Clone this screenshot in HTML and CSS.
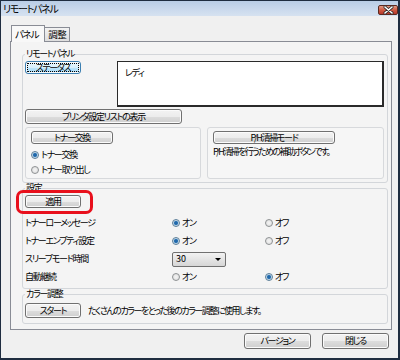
FILE: index.html
```html
<!DOCTYPE html>
<html lang="ja">
<head>
<meta charset="utf-8">
<link rel="stylesheet" href="styles.css">
</head>
<body>
<div class="window">
  <div class="titlebar">
    <span class="title">リモートパネル</span>
    <span class="close"><svg width="11" height="8" viewBox="0 0 11 8"><path d="M2 1 L9 7 M9 1 L2 7" stroke="#2a2a2a" stroke-width="3" stroke-linecap="round"/><path d="M2 1 L9 7 M9 1 L2 7" stroke="#ffffff" stroke-width="1.6" stroke-linecap="round"/></svg></span>
  </div>
  <div class="client">
    <div class="tabs">
      <div class="tab active">パネル</div>
      <div class="tab">調整</div>
    </div>
    <div class="panel">
      <fieldset class="group g1">
        <legend>リモートパネル</legend>
        <div class="row1">
          <button class="btn focus status">ステータス</button>
          <div class="statusbox">レディ</div>
        </div>
        <button class="btn listbtn">プリンタ設定リストの表示</button>
        <div class="subs">
          <div class="sub">
            <button class="btn tonerbtn">トナー交換</button>
            <div class="opt first"><span class="radio on"></span>トナー交換</div>
            <div class="opt"><span class="radio"></span>トナー取り出し</div>
          </div>
          <div class="sub">
            <button class="btn phbtn">P/H清掃モード</button>
            <p class="note">P/H清掃を行うための補助ボタンです。</p>
          </div>
        </div>
      </fieldset>
      <fieldset class="group g2">
        <legend>設定</legend>
        <div class="applywrap">
          <button class="btn apply">適用</button>
          <span class="highlight"></span>
        </div>
        <div class="settings">
          <div class="lbl">トナーローメッセージ</div>
          <div class="opt"><span class="radio on"></span>オン</div>
          <div class="opt"><span class="radio"></span>オフ</div>

          <div class="lbl">トナーエンプティ設定</div>
          <div class="opt"><span class="radio on"></span>オン</div>
          <div class="opt"><span class="radio"></span>オフ</div>

          <div class="lbl">スリープモード時間</div>
          <div class="opt"><div class="select"><span>30</span><span class="arrow"></span></div></div>
          <div></div>

          <div class="lbl">自動継続</div>
          <div class="opt"><span class="radio"></span>オン</div>
          <div class="opt"><span class="radio on"></span>オフ</div>
        </div>
      </fieldset>
      <fieldset class="group g3">
        <legend>カラー調整</legend>
        <div class="colorrow">
          <button class="btn startbtn">スタート</button>
          <span>たくさんのカラーをとった後のカラー調整に使用します。</span>
        </div>
      </fieldset>
    </div>
    <div class="footer">
      <button class="btn fbtn">バージョン</button>
      <button class="btn fbtn">閉じる</button>
    </div>
  </div>
</div>
</body>
</html>
```

FILE: styles.css
```css
* { box-sizing: border-box; }
html, body { margin: 0; padding: 0; }
body {
  width: 400px;
  height: 360px;
  font-family: "Noto Sans CJK JP", "Noto Sans", sans-serif;
  font-size: 9px;
  line-height: 12px;
  font-feature-settings: "palt";
  letter-spacing: -1.3px;
  color: #000;
  background: #f0f0f0;
}
.window {
  width: 400px;
  height: 360px;
  border: 1px solid #1f2d40;
  border-width: 1px 2px 2px 1px;
  background: #f0f0f0;
  display: flex;
  flex-direction: column;
}
.titlebar {
  height: 15px;
  flex: none;
  display: flex;
  align-items: center;
  justify-content: space-between;
  padding: 0 0 0 2px;
  background: linear-gradient(#b9cde6, #cbdaed 60%, #d6e2f0);
}
.title {
  font-size: 10px;
  line-height: 12px;
  letter-spacing: -1.3px;
}
.close {
  width: 20px;
  height: 10px;
  margin-top: 3px;
  border: 1px solid #5a2a20;
  border-radius: 2px;
  background: linear-gradient(#e49b86, #cf5a42 50%, #b8382a);
  display: flex;
  align-items: center;
  justify-content: center;
}
.close svg { display: block; }
.client {
  flex: 1;
  padding: 8px 6px 0 9px;
  display: flex;
  flex-direction: column;
}
.tabs {
  display: flex;
  align-items: flex-end;
  height: 17px;
  padding-left: 1px;
}
.tab {
  height: 14px;
  padding: 0 3px 0 3px;
  line-height: 13px;
  border: 1px solid #898c95;
  border-bottom: none;
  border-left: none;
  background: linear-gradient(#f2f2f2, #dedede);
  font-size: 9.5px;
  letter-spacing: -0.6px;
  white-space: nowrap;
}
.tab.active {
  height: 17px;
  margin-bottom: -1px;
  border-left: 1px solid #898c95;
  border-right: 1px solid #898c95;
  background: #f8f8f8;
  position: relative;
  z-index: 1;
  padding: 1px 6px 0 3px;
  line-height: 14px;
  letter-spacing: -1.2px;
}
.panel {
  border: 1px solid #898c95;
  background: #f4f4f4;
  height: 289px;
  padding: 0 3px 0 11px;
  display: flex;
  flex-direction: column;
}
.group {
  margin: 0;
  border: 1px solid #d3d6da;
  border-radius: 3px;
  padding: 2px 3px 3px 2px;
  min-width: 0;
}
.group legend {
  padding: 0 1px;
  margin-left: 0;
  line-height: 10px;
  height: 10px;
  white-space: nowrap;
}
.g1 { margin-top: 7px; }
.g2 { padding-bottom: 2px; }
.g3 { padding-top: 4px; padding-bottom: 5px; }

.btn {
  font: inherit;
  font-feature-settings: "palt";
  letter-spacing: -1.3px;
  color: #000;
  margin: 0;
  padding: 0;
  border: 1px solid #707070;
  border-radius: 3px;
  background: linear-gradient(#f3f3f3 0, #ececec 50%, #dddddd 51%, #cfcfcf 100%);
  box-shadow: inset 0 0 0 1px #fbfbfb;
  height: 13px;
  line-height: 11px;
  display: block;
  text-align: center;
  white-space: nowrap;
}
.btn.focus {
  border-color: #3c7fb1;
  background: linear-gradient(#eaf6fd 0, #d9f0fc 50%, #bee6fd 51%, #a7d9f5 100%);
  outline: 1px dotted #000;
  outline-offset: -3px;
}
.row1 {
  display: flex;
  align-items: flex-start;
  height: 46px;
}
.status { width: 56px; }
.statusbox {
  margin-left: 36px;
  width: 268px;
  height: 46px;
  background: #fff;
  border: solid #2a2a2a;
  border-width: 1px 2px 2px 1px;
  padding: 5px 7px;
  line-height: 12px;
}
.listbtn {
  width: 157px;
  height: 15px;
  line-height: 13px;
  margin-top: 2px;
}
.subs {
  display: flex;
  gap: 6px;
  margin-top: 3px;
}
.sub {
  height: 52px;
  border: 1px solid #d7d9dc;
  border-radius: 3px;
  padding: 3px 5px;
  background: #f6f6f6;
}
.sub:first-child { width: 176px; }
.sub:last-child { flex: 1; }
.tonerbtn { width: 82px; }
.phbtn { width: 122px; }
.opt {
  display: flex;
  align-items: center;
  line-height: 12px;
  white-space: nowrap;
}
.sub .opt.first { margin-top: 5px; }
.sub .opt + .opt { margin-top: 3px; }
.radio {
  width: 8px;
  height: 8px;
  border-radius: 50%;
  border: 1px solid #8e9193;
  background: radial-gradient(circle at 50% 50%, #f4f4f4 0, #dcdcdc 100%);
  margin-right: 2px;
  flex: none;
}
.radio.on {
  border-color: #5c7e98;
  background: radial-gradient(circle at 50% 50%, #1b5d9c 0, #2c74b5 1.6px, #c8dcea 2.6px, #e4eef5 100%);
}
.note {
  margin: 2px 0 0;
  line-height: 12px;
  white-space: nowrap;
  letter-spacing: -1.6px;
}
.applywrap {
  position: relative;
  width: 56px;
}
.apply { width: 56px; }
.highlight {
  position: absolute;
  left: -9px;
  top: -5px;
  width: 77px;
  height: 24px;
  border: 3px solid #e8101c;
  border-radius: 7px;
}
.settings {
  margin-top: 6px;
  display: grid;
  grid-template-columns: 147px 93px 1fr;
  grid-auto-rows: 18px;
  align-items: center;
}
.lbl { white-space: nowrap; }
.select {
  width: 54px;
  height: 15px;
  border: 1px solid #707070;
  border-radius: 2px;
  background: linear-gradient(#f2f2f2, #e4e4e4 50%, #d6d6d6);
  display: flex;
  align-items: center;
  justify-content: space-between;
  padding: 0 4px 0 3px;
  line-height: 12px;
  letter-spacing: 0;
}
.arrow {
  width: 0;
  height: 0;
  border-left: 3px solid transparent;
  border-right: 3px solid transparent;
  border-top: 3px solid #000;
}
.colorrow {
  display: flex;
  align-items: center;
  gap: 7px;
  white-space: nowrap;
}
.colorrow span { letter-spacing: -1.5px; }
.startbtn {
  width: 56px;
  height: 15px;
  line-height: 13px;
}
.footer {
  display: flex;
  justify-content: flex-end;
  gap: 11px;
  margin-top: 3px;
  padding-right: 3px;
}
.fbtn {
  width: 67px;
  height: 16px;
  line-height: 14px;
}
```
